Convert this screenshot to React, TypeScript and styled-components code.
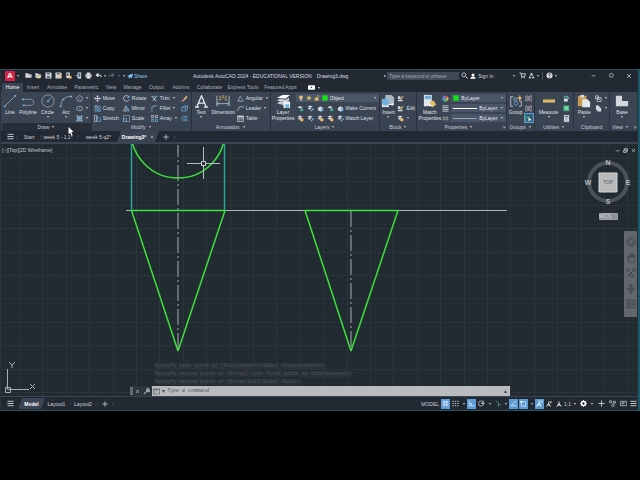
import React from 'react';
import styled, { createGlobalStyle, css } from 'styled-components';

const c = {
  frame: '#1d5a69',
  bar: '#222933',
  panel: '#3b4453',
  panelTitle: '#394250',
  field: '#4a5567',
  canvas: '#222a31',
  text: '#c9ced6',
  blue: '#5d9bd5',
  green: '#3be23b',
};

const GlobalStyle = createGlobalStyle`
  *, *::before, *::after { box-sizing: border-box; }
  html, body { margin: 0; background: #000; }
  body { font-family: "Liberation Sans", Arial, sans-serif; font-size: 5px; line-height: 6px; color: ${c.text}; }
  button, input, select { font: inherit; color: inherit; margin: 0; padding: 0; border: 0; background: none; border-radius: 0; }
  svg { display: block; flex: none; }
`;

/* ---------- glyphs, all drawn on a 16 unit square ---------- */
const W = '#d5d9df';
const B = '#6fb1dc';
const Y = '#e5c069';
const G = '#3fbf7f';

const glyphs: Record<string, React.ReactNode> = {
  caret: <path d="M3 5h10l-5 6z" fill={W} />,
  caretDim: <path d="M3 5h10l-5 6z" fill="#69727e" />,
  right: <path d="M5 3l7 5-7 5z" fill={W} />,
  newFile: <><path d="M1 3h6l2 2h6v8H1z" fill={W} /><path d="M8 8h7" stroke="#8a929c" /></>,
  open: <><path d="M1 3h5l2 2h5v3H5l-2 5H1z" fill={W} /><path d="M5 8h10l-3 6H3z" fill="#e9d9a8" /></>,
  save: <><path d="M1 1h12l2 2v12H1z" fill={W} /><path d="M4 2h7v4H4zM4 9h8v5H4z" fill="#6d7784" /></>,
  saveAs: <><path d="M1 1h12l2 2v12H1z" fill={W} /><path d="M4 2h7v4H4z" fill="#6d7784" /><path d="M7 14l7-7" stroke={Y} strokeWidth="3" /></>,
  web: <><path d="M3 1h8v13H3z" fill={W} /><path d="M5 3h3v6H5z" fill="#4c5664" /><path d="M9 9h6v6H9z" fill={Y} /></>,
  mobile: <><path d="M6 1h8v14H6z" fill={W} /><path d="M8 3h4v8H8z" fill="#4c5664" /><path d="M1 8h7M5 5l3 3-3 3" stroke={B} strokeWidth="2" fill="none" /></>,
  print: <><path d="M4 1h8v4H4zM1 5h14v7H1z" fill={W} /><path d="M4 9h8v6H4z" fill="#fff" stroke="#6d7784" /></>,
  undo: <path d="M15 11c0-3-3-4-8-4M7 3L2 7l5 4z" stroke={W} strokeWidth="2" fill={W} />,
  redo: <path d="M1 11c0-3 3-4 8-4M9 3l5 4-5 4z" stroke="#59626e" strokeWidth="2" fill="#59626e" />,
  plane: <path d="M0 8L16 1l-3 13-5-3-3 4-1-5 8-6-7 5z" fill="#7fc4ee" />,
  search: <><circle cx="6.500" cy="6.500" r="4.500" fill="none" stroke={W} strokeWidth="1.800" /><path d="M10 10l5 5" stroke={W} strokeWidth="2.200" /></>,
  user: <><circle cx="8" cy="5" r="4" fill="#fff" /><path d="M1 15c0-8 14-8 14 0z" fill="#fff" /></>,
  cart: <><path d="M1 2h3l2 8h7l2-6H5" fill="none" stroke={W} strokeWidth="2" /><circle cx="6" cy="13" r="1.600" fill={W} /><circle cx="12" cy="13" r="1.600" fill={W} /></>,
  autodesk: <><path d="M8 1l4 7H4z" fill={W} /><path d="M1 14l3-5 4 5zM15 14l-3-5-4 5z" fill={W} /></>,
  help: <><circle cx="8" cy="8" r="7" fill={W} /><path d="M6 6c0-3 5-3 4 0-1 1-2 1-2 3M8 11v2" fill="none" stroke={c.bar} strokeWidth="1.800" /></>,
  min: <path d="M2 9h12" stroke={W} strokeWidth="2" />,
  restore: <rect x="2" y="2" width="11" height="11" rx="2" fill="none" stroke={W} strokeWidth="2" />,
  cascade: <path d="M2 7h8v7H2zM5 6V2h9v8h-4" fill="none" stroke="#fff" strokeWidth="2" />,
  close: <path d="M3 3l10 10M13 3L3 13" stroke={W} strokeWidth="2" />,
  menu: <path d="M1 3h14M1 8h14M1 13h14" stroke={W} strokeWidth="2" />,
  plus: <path d="M8 1v14M1 8h14" stroke={W} strokeWidth="2" />,
  line: <><path d="M2 14L14 2" stroke="#9ba6b3" strokeWidth="0.900" /><path d="M1 13h2v2H1zM13 1h2v2h-2z" fill={B} /></>,
  polyline: <><path d="M2 6h8c6 0 6 7 0 7H3" fill="none" stroke="#9ba6b3" strokeWidth="0.900" /><path d="M1 5h2v2H1zM2 12h2v2H2z" fill={B} /></>,
  circle: <><circle cx="8" cy="8" r="7" fill="none" stroke="#9ba6b3" strokeWidth="0.900" /><path d="M8 8l4-4" stroke={B} /><path d="M7 7h2v2H7z" fill={B} /></>,
  arc: <><path d="M2 14C2 7 7 2 14 3" fill="none" stroke="#9ba6b3" strokeWidth="0.900" /><path d="M1 13h2v2H1zM4 5h2v2H4zM13 2h2v2h-2z" fill={B} /></>,
  polygon: <><path d="M8 1l7 5-3 8H4L1 6z" fill="none" stroke={W} strokeWidth="1.300" /><path d="M7 7h2v2H7z" fill={B} /></>,
  ellipse: <><ellipse cx="8" cy="8" rx="7" ry="5" fill="none" stroke={W} strokeWidth="1.300" /><path d="M7 7h2v2H7z" fill={B} /></>,
  hatch: <><rect x="3" y="3" width="10" height="10" fill="#6485a8" /><path d="M3 0v16M13 0v16M0 3h16M0 13h16M8 3v10M3 8h10" stroke="#a9c2da" strokeWidth="1.300" /></>,
  move: <path d="M8 0l3 4H9v3h3V5l4 3-4 3V9H9v3h2l-3 4-3-4h2V9H4v2L0 8l4-3v2h3V4H5z" fill={W} />,
  copy: <><circle cx="5" cy="4" r="3" fill="none" stroke={W} strokeWidth="1.500" /><circle cx="12" cy="5" r="3" fill="none" stroke={B} strokeWidth="1.500" /><path d="M2 9h6v5H2zM10 10h5v5h-5z" fill="none" stroke={B} strokeWidth="1.500" /></>,
  stretch: <><path d="M1 1h5v14H1z" fill="none" stroke={W} strokeWidth="1.500" /><path d="M8 4v11h7V8z" fill="none" stroke={B} strokeWidth="1.500" /></>,
  rotate: <><path d="M13 4A6.500 6.500 0 1 0 14 10" fill="none" stroke={W} strokeWidth="1.800" /><path d="M15 0v6H9z" fill={B} /></>,
  mirror: <><path d="M6 3v11H1z" fill="none" stroke={W} strokeWidth="1.300" /><path d="M10 3v11h5z" fill={B} /><path d="M8 0v16" stroke={B} /></>,
  scale: <><path d="M1 1h14v14H1z" fill="none" stroke="#9aa4b0" strokeWidth="1.500" /><path d="M1 8h7v7H1z" fill="none" stroke={B} strokeWidth="1.800" /></>,
  trim: <><path d="M1 2l11 12M12 3L5 13" stroke={W} strokeWidth="2" /><path d="M3 3h12" stroke={B} strokeWidth="1.500" /></>,
  fillet: <><path d="M2 15V8c0-4 3-6 7-6h6" fill="none" stroke="#9aa4b0" strokeWidth="1.500" /><path d="M2 8c0-4 3-6 7-6" fill="none" stroke={B} strokeWidth="2" /></>,
  array: <><path d="M1 1h5v5H1zM10 1h5v5h-5z" fill="none" stroke={W} strokeWidth="1.500" /><path d="M1 10h5v5H1zM10 10h5v5h-5z" fill="none" stroke={B} strokeWidth="1.700" /></>,
  erase: <><path d="M5 10L12 2l3 2-7 8z" fill={Y} /><path d="M3 10l5 3-3 2H1z" fill="#d98c8c" /></>,
  explode: <><path d="M2 6h8v8H2z" fill="none" stroke={B} strokeWidth="1.600" /><path d="M2 6l4-4h9v8l-5 4M10 6l5-4" fill="none" stroke={B} strokeWidth="1.600" /></>,
  offset: <path d="M15 3H6C0 3 0 13 6 13h9M15 6H8c-3 0-3 4 0 4h7" fill="none" stroke={B} strokeWidth="1.500" />,
  textA: <path d="M2 15L8 1l6 14M4 10h8M0 15h5M11 15h5" fill="none" stroke="#e8ebef" strokeWidth="1.600" />,
  dimension: <><path d="M1 2v12M15 2v12M1 11h14" fill="none" stroke="#c0c7d0" strokeWidth="0.900" /><path d="M8 1v4M4 2l2 3M12 2l-2 3M3 6l3 1M13 6l-3 1" stroke={Y} /><path d="M3 9l-2 2 2 2M13 9l2 2-2 2" fill="none" stroke={B} /></>,
  angular: <><path d="M8 2L2 14h13" fill="none" stroke={W} strokeWidth="1.400" /><path d="M7 6c4 0 6 3 6 7" fill="none" stroke={B} strokeWidth="1.500" /></>,
  leader: <><path d="M1 14L6 4h5" fill="none" stroke={W} strokeWidth="1.500" /><circle cx="13" cy="4" r="2.500" fill="none" stroke={B} strokeWidth="1.300" /></>,
  table: <><path d="M1 2h14v13H1z" fill="none" stroke={W} strokeWidth="1.500" /><path d="M1 4h14" stroke={W} strokeWidth="3" /><path d="M6 4v11M11 4v11M1 9h14" stroke={W} /></>,
  layers: <><path d="M1 4l6-3h8l-5 4z" fill="#fff" /><path d="M1 7l3-2 6 1 4-2v3l-4 2zM1 10l3-2 5 1v3z" fill="#c9ced5" /><path d="M8 8h7v7H8z" fill="#eef0f3" /><path d="M10 11h4v4h-4z" fill={B} /></>,
  bulb: <><circle cx="8" cy="6" r="5" fill={Y} /><path d="M6 11h4v4H6z" fill={W} /></>,
  sun: <><circle cx="8" cy="8" r="4" fill={Y} /><path d="M8 0v16M0 8h16M2 2l12 12M14 2L2 14" stroke={Y} /></>,
  lock: <><path d="M2 7h10v8H2z" fill={Y} /><path d="M9 7V4c0-4 6-3 5 1" fill="none" stroke={Y} strokeWidth="1.800" /></>,
  green: <path d="M1 1h14v14H1z" fill="#12e612" />,
  layerA: <><path d="M1 5l6-3 6 3-6 3z" fill={W} /><path d="M8 8h6v6H8z" fill={G} /></>,
  layerB: <><path d="M1 4l6-3 6 3-6 3zM1 8l6-2 3 2-4 3z" fill={W} /><path d="M9 14l6-6" stroke={B} strokeWidth="3" /></>,
  layerC: <><path d="M1 4l6-3 6 3-6 3zM1 8l6-2 3 2-4 3z" fill={W} /><circle cx="11" cy="11" r="4" fill={Y} /></>,
  layerD: <><path d="M2 7l5-4 7 3v7l-6 2-6-3z" fill={W} /><path d="M9 8l5-2v7l-5 2z" fill={B} /></>,
  insert: <><path d="M1 6h8v9H1z" fill="#dfe3e8" /><path d="M5 1h7l3 3v8H5z" fill="#aeb8c4" /><circle cx="5" cy="9" r="4" fill={B} /><path d="M9 12h5M12 10l2 2-2 2" stroke="#fff" fill="none" /></>,
  blockA: <><path d="M2 3h6v6H2zM2 11h11v3H2z" fill={W} /><path d="M8 10l6-7" stroke={Y} strokeWidth="2.500" /></>,
  match: <><path d="M1 1h9v13H1z" fill="#e3e7ec" /><path d="M2 2h7v4H2z" fill={B} /><path d="M7 10l5-3 3 5-4 3z" fill={Y} /><path d="M7 11l4 4" stroke="#fff" /></>,
  wheel: <><path d="M8 8V1a7 7 0 0 1 6 4z" fill="#e3594f" /><path d="M8 8l6-3a7 7 0 0 1-1 8z" fill="#e6b94b" /><path d="M8 8l5 5a7 7 0 0 1-9 1z" fill="#58c26a" /><path d="M8 8l-4 6a7 7 0 0 1-2-10z" fill="#4b98e0" /><path d="M8 8L2 4a7 7 0 0 1 6-3z" fill="#b565cf" /></>,
  weights: <path d="M1 2h14M1 6h14M1 10h14M1 14h14" stroke={W} strokeWidth="2" />,
  linetype: <><path d="M1 3h14v10H1z" fill="#59636f" /><path d="M2 6h5M9 6h5M2 10h3M6 10h3M11 10h3" stroke={W} /></>,
  group: <><path d="M4 2H1v13h3M12 8h3v7h-3" fill="none" stroke={W} /><circle cx="8" cy="11" r="2.500" fill="none" stroke={B} /><path d="M5 4h4v3H5z" fill="none" stroke={B} /><circle cx="13" cy="4" r="2" fill={Y} /><path d="M13 0v8M9 4h7" stroke={Y} strokeWidth="0.800" /></>,
  ungroup: <><path d="M5 2H2v12h3M11 2h3v12h-3M6 4h4v3H6zM6 9h4v3H6z" fill="none" stroke={W} strokeWidth="1.300" /><path d="M10 5l4-4M10 10l4 4" stroke="#d76b6b" strokeWidth="2" /></>,
  groupSel: <><path d="M4 2H1v12h3M5 4h4v3H5z" fill="none" stroke={G} strokeWidth="1.500" /><path d="M8 5v10l3-3h4z" fill="#fff" /></>,
  measure: <><path d="M0 6h16v4H0z" fill={Y} /><path d="M2 6v2M5 6v2M8 6v2M11 6v2M14 6v2" stroke="#b08a3b" strokeWidth="0.700" /></>,
  quick: <><path d="M2 8h9v7H2z" fill={W} /><path d="M7 2l7 6" stroke={B} strokeWidth="3" /><circle cx="4" cy="4" r="2.500" fill={G} /></>,
  select: <><path d="M1 1h13v13H1z" fill={G} /><path d="M4 9l4-5 3 7" stroke="#fff" strokeWidth="1.500" fill="none" /></>,
  calc: <><path d="M2 0h12v16H2z" fill={W} /><path d="M4 2h8v3H4z" fill="#59636f" /><path d="M4 8h8M4 11h8M4 14h8" stroke="#59636f" strokeDasharray="2 1" /></>,
  paste: <><path d="M1 2h10v12H1z" fill="#c79a55" /><path d="M4 1h4v3H4z" fill="#d9dde2" /><path d="M6 6h6l3 3v6H6z" fill="#e3e7ec" /></>,
  cut: <><path d="M1 2h7v7H1zM5 6h9v9H5z" fill="none" stroke={W} strokeWidth="1.600" /><path d="M4 5l8 7" stroke={W} strokeWidth="2" /></>,
  page: <path d="M2 1h7v3h2l3 4v7H5v-4H2z" fill={W} />,
  base: <path d="M1 2h7v6h7v6H1z" fill="#d3d7dd" />,
  wrench: <path d="M2 14l7-7M9 7c-2-4 2-7 4-5l-2 2 1 2 3-1c0 4-4 5-6 2" fill="none" stroke="#aeb3b9" strokeWidth="2.400" />,
  prompt: <><path d="M1 2h14v12H1z" fill="none" stroke="#5d6268" strokeWidth="1.500" /><path d="M1 4h14" stroke="#5d6268" strokeWidth="2" /><path d="M4 7l3 2-3 2" fill="none" stroke="#5d6268" /></>,
  grid: <path d="M5 1v14M11 1v14M1 5h14M1 11h14" stroke="#e5effa" strokeWidth="1.800" />,
  dots: <path d="M1 3h14M1 8h14M1 13h14" stroke={W} strokeWidth="2" strokeDasharray="3 2.500" />,
  ortho: <path d="M3 1v12h12M3 8h5v5" fill="none" stroke="#e5effa" strokeWidth="1.500" />,
  polar: <><circle cx="7" cy="8" r="6" fill="none" stroke={W} strokeWidth="1.500" /><path d="M7 8h8M7 8l7-6" stroke={W} strokeWidth="1.500" /></>,
  iso: <><path d="M2 2l6 5v8" fill="none" stroke="#50b870" strokeWidth="1.600" /><path d="M8 8l6 5" stroke="#8f98a3" strokeWidth="1.500" /></>,
  track: <path d="M14 2L2 13h13" fill="none" stroke="#e5effa" strokeWidth="1.800" />,
  snap: <><path d="M3 4h10v10H3z" fill="none" stroke="#e5effa" strokeWidth="1.600" /><path d="M1 2h4v4H1z" fill="#fff" /></>,
  person: <path d="M8 1v7M8 7l-6 8M8 7l6 8M4 11h8" stroke="#fff" strokeWidth="2.200" fill="none" />,
  personX: <path d="M7 1v7M7 7l-6 8M7 7l5 8M3 11h8M10 1l5 5M15 1l-5 5" stroke="#fff" strokeWidth="1.900" fill="none" />,
  gear: <><circle cx="8" cy="8" r="4.500" fill="none" stroke="#fff" strokeWidth="3.500" /><path d="M8 0v3M8 13v3M0 8h3M13 8h3M2 2l2 2M12 12l2 2M14 2l-2 2M2 14l2-2" stroke="#fff" strokeWidth="2" /></>,
  isolate: <><path d="M1 2h5v4H1zM10 3h5v4h-5z" fill="none" stroke={W} strokeWidth="1.500" /><circle cx="9" cy="12" r="3" fill="none" stroke={W} strokeWidth="1.500" /></>,
  clean: <><path d="M1 3h14v10H1z" fill="none" stroke={W} strokeWidth="1.500" /><path d="M5 10V6h5M6 10l5-4" fill="none" stroke={W} strokeWidth="1.500" /></>,
  media: <><rect x="0" y="3" width="16" height="10" rx="2" fill="#fff" /><path d="M6 6h4l-2 4z" fill={c.bar} /></>,
  arrow: <path d="M1 0v13l3-3 2 5 2-1-2-5h4z" fill="#fff" />,
  out: <path d="M3 3l8 8M12 5v7H5" stroke={W} strokeWidth="2" fill="none" />,
};

const Icon = ({ n, s = 7 }: { n: string; s?: number }) => (
  <svg width={s} height={s} viewBox="0 0 16 16" aria-hidden="true">{glyphs[n]}</svg>
);

/* ---------- window frame ---------- */
const Page = styled.div`
  min-height: 100vh;
  display: flex;
  flex-direction: column;
  padding: 69px 0;
  background: #000;
`;
const Window = styled.main`
  position: relative;
  flex: 1;
  display: flex;
  flex-direction: column;
  border: 1px solid ${c.frame};
  border-left-color: #2a323c;
  border-right-width: 2px;
  background: ${c.bar};
  overflow: hidden;
  white-space: nowrap;
`;

const TitleBar = styled.header`
  height: 11px;
  display: grid;
  grid-template-columns: 192fr 190fr 255fr;
  align-items: center;
`;
const Cluster = styled.div`
  display: flex;
  align-items: center;
  min-width: 0;
`;
const IconButton = styled.button<{ $w?: number; $on?: boolean; $h?: number }>`
  width: ${p => p.$w ?? 9}px;
  height: ${p => p.$h ?? 10}px;
  flex: none;
  display: flex;
  align-items: center;
  justify-content: center;
  ${p => p.$on && css`background: ${c.blue};`}
`;
const Logo = styled.button`
  width: 10px;
  height: 10px;
  margin-left: 4px;
  background: #d81f45;
  color: #fff;
  font-size: 8px;
  line-height: 10px;
  font-weight: bold;
`;
const TextButton = styled.button`
  display: flex;
  align-items: center;
  gap: 2px;
`;
const Share = styled(TextButton)`
  gap: 1px;
  color: #8fc4e6;
`;
const Title = styled.h1`
  margin: 0;
  display: flex;
  gap: 5px;
  font-size: 5px;
  font-weight: normal;
  color: #d8dce2;
`;
const SearchInput = styled.input`
  flex: 0 1 72px;
  min-width: 0;
  height: 8px;
  padding: 0 2px;
  background: #414956;
  &::placeholder { color: #a3a9b2; font-style: italic; opacity: 1; }
`;
const Divider = styled.span`
  width: 1px;
  height: 8px;
  margin: 0 2px;
  background: #454d59;
`;
const Spacer = styled.span<{ $w?: number }>`
  flex: ${p => (p.$w ? `0 1 ${p.$w}px` : '1')};
`;

/* ---------- ribbon ---------- */
const RibbonTabs = styled.nav`
  height: 11px;
  padding-left: 1px;
  display: flex;
  align-items: flex-end;
`;
const RibbonTab = styled.button<{ $active?: boolean; $w: number }>`
  flex: 0 1 ${p => p.$w}px;
  height: 9px;
  line-height: 9px;
  text-align: center;
  color: ${p => (p.$active ? '#fff' : '#a9afb9')};
  background: ${p => (p.$active ? c.panel : 'transparent')};
`;
const Ribbon = styled.div`
  display: grid;
  grid-template-columns: 90fr 100fr 79fr 110fr 37fr 90fr 28fr 39fr 36fr 28fr;
  padding-left: 1px;
  background: ${c.panel};
`;
const Panel = styled.section`
  min-width: 0;
  display: flex;
  flex-direction: column;
  border-right: 1px solid #29313c;
`;
const PanelBody = styled.div`
  height: 31px;
  padding-top: 1px;
  display: flex;
`;
const PanelTitle = styled.button<{ $hover?: boolean }>`
  height: 8px;
  display: flex;
  align-items: center;
  justify-content: center;
  gap: 2px;
  background: ${p => (p.$hover ? '#272e39' : c.panelTitle)};
`;
const BigButton = styled.button<{ $w: number }>`
  flex: 0 1 ${p => p.$w}px;
  min-width: 0;
  height: 30px;
  display: flex;
  flex-direction: column;
  align-items: center;
  line-height: 6px;
  color: #e0e3e8;
`;
const BigIcon = styled.span`
  height: 16px;
  display: flex;
  align-items: center;
`;
const BigLabel = styled.span`
  display: block;
  white-space: pre;
  text-align: center;
`;
const Column = styled.div<{ $w?: number }>`
  flex: ${p => (p.$w ? `0 1 ${p.$w}px` : '1')};
  min-width: 0;
  display: flex;
  flex-direction: column;
`;
const Row = styled.div<{ $gap?: number }>`
  height: 10px;
  display: flex;
  align-items: center;
  gap: ${p => p.$gap ?? 0}px;
`;
const Tool = styled.button<{ $on?: boolean }>`
  display: flex;
  align-items: center;
  gap: 2px;
  height: 10px;
  padding: 0 1px;
  color: #dde1e6;
  ${p => p.$on && css`background: #35607a; outline: 1px solid ${c.blue}; outline-offset: -1px;`}
`;
const Combo = styled.label`
  flex: 1;
  min-width: 0;
  height: 8px;
  padding: 0 2px;
  display: flex;
  align-items: center;
  gap: 2px;
  background: ${c.field};
`;
const Select = styled.select<{ $fixed?: boolean }>`
  appearance: none;
  flex: ${p => (p.$fixed ? 'none' : '1')};
  min-width: 0;
  height: 8px;
  line-height: 8px;
  color: #e6e9ed;
`;
const Stroke = styled.span<{ $thick?: boolean }>`
  flex: 1;
  height: 1px;
  background: ${p => (p.$thick ? '#fff' : '#98a1ad')};
`;

const Big = ({ n, label, w, caret, s = 14 }: { n: string; label: string; w: number; caret?: boolean; s?: number }) => (
  <BigButton $w={w}>
    <BigIcon><Icon n={n} s={s} /></BigIcon>
    <BigLabel>{label}</BigLabel>
    {caret && <Icon n="caret" s={4} />}
  </BigButton>
);
const Small = ({ n, label, caret, on, s = 7 }: { n: string; label?: string; caret?: boolean; on?: boolean; s?: number }) => (
  <Tool $on={on} aria-label={label ?? n}>
    <Icon n={n} s={s} />
    {label && <span>{label}</span>}
    {caret && <Icon n="caret" s={4} />}
  </Tool>
);
const Group = ({ title, children, hover, caret = true, out }: { title: string; children: React.ReactNode; hover?: boolean; caret?: boolean; out?: boolean }) => (
  <Panel>
    <PanelBody>{children}</PanelBody>
    <PanelTitle $hover={hover}>
      {out && <Spacer />}
      <span>{title}</span>
      {caret && <Icon n="caret" s={4} />}
      {out && <><Spacer /><Icon n="out" s={4} /></>}
    </PanelTitle>
  </Panel>
);

/* ---------- document and layout tabs ---------- */
const FileTabs = styled.nav`
  height: 13px;
  padding-left: 5px;
  display: flex;
  align-items: center;
  border-bottom: 2px solid ${c.panel};
`;
const DocTab = styled.button<{ $active?: boolean; $w: number }>`
  flex: 0 1 ${p => p.$w}px;
  height: 11px;
  display: flex;
  align-items: center;
  justify-content: center;
  gap: 4px;
  color: ${p => (p.$active ? '#fff' : '#d0d4da')};
  font-weight: ${p => (p.$active ? 'bold' : 'normal')};
  ${p => p.$active && css`
    background: ${c.panel};
    clip-path: polygon(4px 0, 100% 0, calc(100% - 4px) 100%, 0 100%);
  `}
`;
const Slash = styled.span`
  flex: 0 0 4px;
  color: #606873;
  text-align: center;
`;

/* ---------- drawing area ---------- */
const Viewport = styled.section`
  position: relative;
  flex: 1;
  min-height: 252px;
  background: ${c.canvas};
`;
const Drawing = styled.svg`
  position: absolute;
  inset: 0;
  width: 100%;
  height: 100%;
`;
const ViewLabel = styled.div`
  position: absolute;
  left: 1px;
  top: 3px;
  color: #c5cad0;
`;
const ViewControls = styled.div`
  position: absolute;
  right: 1px;
  top: 1px;
  display: flex;
`;
const ViewCube = styled.div`
  position: absolute;
  right: 6px;
  top: 13px;
  width: 48px;
  display: flex;
  flex-direction: column;
  align-items: center;
  gap: 6px;
`;
const Wcs = styled.button`
  width: 19px;
  height: 7px;
  border-radius: 1px;
  background: #8b9097;
  border: 1px solid #a0a4aa;
  color: #d5d8dc;
  line-height: 5px;
  text-align: left;
`;
const NavBar = styled.div`
  position: absolute;
  right: 1px;
  top: 87px;
  width: 13px;
  height: 86px;
  padding: 6px 0 8px;
  display: flex;
  flex-direction: column;
  align-items: center;
  justify-content: space-between;
  border-radius: 1px;
  background: #62676d;
`;
const CommandDock = styled.div`
  position: absolute;
  left: 129px;
  right: 128px;
  bottom: 0;
`;
const History = styled.div`
  padding-left: 25px;
  font-family: "Liberation Mono", monospace;
  color: #50575e;
  p { margin: 0; height: 8px; line-height: 8px; }
  span { background: #293037; }
`;
const CommandRow = styled.div`
  display: flex;
  align-items: center;
  height: 10px;
  background: #2d343b;
`;
const Grip = styled.span`
  width: 3px;
  height: 8px;
  background: #656b72;
`;
const CommandField = styled.label`
  flex: 1;
  min-width: 0;
  height: 10px;
  padding: 0 3px 0 1px;
  display: flex;
  align-items: center;
  gap: 2px;
  background: #b9bbbe;
`;
const CommandInput = styled.input`
  flex: 1;
  min-width: 0;
  height: 10px;
  font-family: "Liberation Mono", monospace;
  font-style: italic;
  &::placeholder { color: #53575c; opacity: 1; }
`;

const StatusBar = styled.footer`
  height: 14px;
  padding-left: 5px;
  display: flex;
  align-items: center;
  border-top: 1px solid ${c.panel};
`;
const Pointer = styled.span`
  position: absolute;
  left: 67px;
  top: 57px;
`;

const NavIcon = ({ d }: { d: string }) => (
  <svg width="10" height="10" viewBox="0 0 16 16"><path d={d} fill="none" stroke="#3e444b" strokeWidth="1.300" /></svg>
);

const Cube = () => (
  <svg width="48" height="50" viewBox="0 0 48 50" fontFamily="Liberation Sans" fontWeight="bold" textAnchor="middle">
    <circle cx="24" cy="25" r="19" fill="none" stroke="#4b5158" strokeWidth="4" />
    <g fontSize="7" fill="#b6babf">
      <text x="24" y="8">N</text><text x="24" y="47">S</text>
      <text x="4" y="28">W</text><text x="44" y="28">E</text>
    </g>
    <path d="M15 16h18v19H15z" fill="#b9babc" stroke="#d1d2d4" />
    <text x="24" y="27" fontSize="5" fontWeight="normal" fill="#555a60">TOP</text>
  </svg>
);

/* Grid rulings as one path: step is the cell size, count the number of lines each way. */
const ruling = (step: number, count: number) =>
  Array.from({ length: count }, (_, i) => {
    const x = Math.round(18 - 23.4 + i * step) + 0.5;
    const y = Math.round(14 - 23.4 + i * step) + 0.5;
    return `M${x} 0V3000M0 ${y}H3000`;
  }).join('');

const Plan = () => (
  <Drawing>
    <path d={ruling(4.68, 600)} stroke="#242c33" />
    <path d={ruling(23.4, 120)} stroke="#2b343b" />
    <path d="M125 66.500h381" stroke="#a9b3b8" />
    <path d="M130.500 0v67M223.500 0v67" stroke="#2aa596" strokeWidth="1.500" />
    <g fill="none" stroke={c.green} strokeWidth="1.500">
      <circle cx="177" cy="-13" r="47" />
      <path d="M130.500 66.500h93.500L177 207zM304 66.500h93L350 207z" strokeLinejoin="bevel" />
    </g>
    <path d="M177 1v206" stroke="#a5acb1" strokeDasharray="16 3 2 3" strokeDashoffset="4" />
    <path d="M350 67v140" stroke="#a5acb1" strokeDasharray="16 3 2 3" />
    <path d="M186 19.500h14M205 19.500h14M202.500 3v14M202.500 22v13" stroke="#b6bcc0" />
    <path d="M200.500 17.500h4v4h-4z" fill="none" stroke="#cfd3d6" />
    <g fill="none" stroke="#a9aeb2">
      <path d="M6.500 225v20.500H28M4.500 243.500h5v5h-5z" />
      <path d="M8 218l3 3 3-3M11 221v3M29 240l5 5M34 240l-5 5" />
    </g>
  </Drawing>
);

const ribbonTabs: [string, number][] = [
  ['Home', 21], ['Insert', 20], ['Annotate', 28], ['Parametric', 31], ['View', 18], ['Manage', 25],
  ['Output', 23], ['Add-ins', 26], ['Collaborate', 31], ['Express Tools', 36], ['Featured Apps', 39],
];

export default function App() {
  return (
    <>
      <GlobalStyle />
      <Page>
        <Window>
          <TitleBar>
            <Cluster>
              <Logo aria-label="Application menu">A</Logo>
              <IconButton $w={6} aria-label="More"><Icon n="caret" s={4} /></IconButton>
              <Spacer $w={2} />
              {['newFile', 'open', 'save', 'saveAs', 'web', 'mobile', 'print', 'undo'].map(n => (
                <IconButton key={n} $w={10} aria-label={n}><Icon n={n} /></IconButton>
              ))}
              <IconButton $w={4} aria-label="Undo list"><Icon n="caret" s={4} /></IconButton>
              <IconButton $w={9} aria-label="Redo"><Icon n="redo" /></IconButton>
              <IconButton $w={5} aria-label="Redo list"><Icon n="caretDim" s={4} /></IconButton>
              <IconButton $w={6} aria-label="Customize"><Icon n="caret" s={4} /></IconButton>
              <Share><Icon n="plane" s={6} /><span>Share</span></Share>
            </Cluster>
            <Title><span>Autodesk AutoCAD 2024 - EDUCATIONAL VERSION</span><span>Drawing3.dwg</span></Title>
            <Cluster>
              <Icon n="right" s={4} />
              <SearchInput aria-label="Search" placeholder="Type a keyword or phrase" />
              <IconButton $w={11} aria-label="Search"><Icon n="search" /></IconButton>
              <TextButton><Icon n="user" s={6} /><span>Sign In</span></TextButton>
              <Spacer $w={17} />
              <IconButton $w={7} aria-label="Account"><Icon n="caret" s={4} /></IconButton>
              <IconButton $w={9} aria-label="Store"><Icon n="cart" /></IconButton>
              <IconButton $w={9} aria-label="Autodesk"><Icon n="autodesk" /></IconButton>
              <Icon n="caret" s={4} />
              <Divider />
              <IconButton aria-label="Help"><Icon n="help" /></IconButton>
              <Icon n="caret" s={4} />
              <Spacer />
              <IconButton $w={18} aria-label="Minimize"><Icon n="min" s={5} /></IconButton>
              <IconButton $w={18} aria-label="Restore"><Icon n="restore" s={5} /></IconButton>
              <IconButton $w={18} aria-label="Close"><Icon n="close" s={6} /></IconButton>
            </Cluster>
          </TitleBar>

          <RibbonTabs>
            {ribbonTabs.map(([t, w], i) => (
              <RibbonTab key={t} $w={w} $active={i === 0}>{t}</RibbonTab>
            ))}
            <Spacer $w={7} />
            <IconButton $h={9} aria-label="Ribbon display"><Icon n="media" /></IconButton>
            <IconButton $w={6} $h={9} aria-label="Ribbon options"><Icon n="caret" s={4} /></IconButton>
          </RibbonTabs>

          <Ribbon>
            <Group title="Draw" hover>
              <Big n="line" label="Line" w={16} />
              <Big n="polyline" label="Polyline" w={20} />
              <Big n="circle" label="Circle" w={19} caret />
              <Big n="arc" label="Arc" w={18} caret />
              <Column>
                <Small n="polygon" caret />
                <Small n="ellipse" caret />
                <Small n="hatch" caret />
              </Column>
            </Group>
            <Group title="Modify">
              <Spacer $w={1} />
              <Column $w={29}><Small n="move" label="Move" /><Small n="copy" label="Copy" /><Small n="stretch" label="Stretch" /></Column>
              <Column $w={28}><Small n="rotate" label="Rotate" /><Small n="mirror" label="Mirror" /><Small n="scale" label="Scale" /></Column>
              <Column $w={30}><Small n="trim" label="Trim" caret /><Small n="fillet" label="Fillet" caret /><Small n="array" label="Array" caret /></Column>
              <Column><Small n="erase" /><Small n="explode" /><Small n="offset" /></Column>
            </Group>
            <Group title="Annotation">
              <Big n="textA" label="Text" w={19} caret s={13} />
              <Big n="dimension" label="Dimension" w={25} />
              <Column><Small n="angular" label="Angular" caret /><Small n="leader" label="Leader" caret /><Small n="table" label="Table" /></Column>
            </Group>
            <Group title="Layers">
              <Big n="layers" label={'Layer\nProperties'} w={25} s={15} />
              <Column>
                <Row>
                  <Combo>
                    <Icon n="bulb" s={6} /><Icon n="sun" s={6} /><Icon n="lock" s={6} /><Icon n="green" s={6} />
                    <Select aria-label="Layer"><option>Object</option></Select>
                    <Icon n="caret" s={4} />
                  </Combo>
                </Row>
                <Row $gap={1}><Small n="layerA" /><Small n="layerB" /><Small n="layerD" /><Small n="layerA" /><Small n="layerD" label="Make Current" /></Row>
                <Row $gap={1}><Small n="layerC" /><Small n="layerB" /><Small n="layerC" /><Small n="layerC" /><Small n="layerB" label="Match Layer" /></Row>
              </Column>
            </Group>
            <Group title="Block">
              <Big n="insert" label="Insert" w={16} caret />
              <Column><Small n="blockA" /><Small n="blockA" label="Edit" /><Small n="layerC" caret /></Column>
            </Group>
            <Group title="Properties" out>
              <Big n="match" label={'Match\nProperties'} w={25} />
              <Column>
                <Row $gap={2}>
                  <Icon n="wheel" />
                  <Combo><Icon n="green" s={6} /><Select aria-label="Color"><option>ByLayer</option></Select><Icon n="caret" s={4} /></Combo>
                </Row>
                <Row $gap={2}>
                  <Icon n="weights" />
                  <Combo><Stroke $thick /><Select $fixed aria-label="Lineweight"><option>ByLayer</option></Select><Icon n="caret" s={4} /></Combo>
                </Row>
                <Row $gap={2}>
                  <Icon n="linetype" />
                  <Combo><Stroke /><Select $fixed aria-label="Linetype"><option>ByLayer</option></Select><Icon n="caret" s={4} /></Combo>
                </Row>
              </Column>
            </Group>
            <Group title="Groups">
              <Big n="group" label="Group" w={17} s={12} />
              <Column><Small n="ungroup" /><Small n="ungroup" /><Small n="groupSel" on /></Column>
            </Group>
            <Group title="Utilities">
              <Big n="measure" label="Measure" w={27} caret s={12} />
              <Column><Small n="quick" /><Small n="select" /><Small n="calc" /></Column>
            </Group>
            <Group title="Clipboard" caret={false}>
              <Big n="paste" label="Paste" w={20} caret />
              <Column><Small n="cut" caret /><Small n="page" caret /></Column>
            </Group>
            <Group title="View" out>
              <Big n="base" label="Base" w={24} caret />
            </Group>
          </Ribbon>

          <FileTabs>
            <IconButton aria-label="Menu"><Icon n="menu" /></IconButton>
            <Slash>/</Slash>
            <DocTab $w={20}>Start</DocTab>
            <Slash>/</Slash>
            <DocTab $w={30}>week 5 - 1.1*</DocTab>
            <Spacer $w={3} />
            <Slash>/</Slash>
            <DocTab $w={37}>week 5-q2*</DocTab>
            <DocTab $w={42} $active>Drawing3* <Icon n="close" s={4} /></DocTab>
            <IconButton $w={14} aria-label="New drawing"><Icon n="plus" s={6} /></IconButton>
            <Slash>/</Slash>
          </FileTabs>

          <Viewport>
            <Plan />
            <ViewLabel>[−][Top][2D Wireframe]</ViewLabel>
            <ViewControls>
              {['min', 'cascade', 'close'].map(n => <IconButton key={n} $w={8} aria-label={`${n} view`}><Icon n={n} s={5} /></IconButton>)}
            </ViewControls>
            <ViewCube><Cube /><Wcs>WCS</Wcs></ViewCube>
            <NavBar>
              <NavIcon d="M8 1a7 7 0 1 0 .1 0M8 4a4 4 0 1 0 .1 0M5 13l3-3 3 3" />
              <NavIcon d="M4 15V9L2 6l2-1 2 3V2h2v5V1h2v6-5h2v6-4h2v8l-2 3z" />
              <NavIcon d="M2 2l12 12M14 2L2 14M2 6V2h4M10 2h4v4M9 9a3 3 0 1 0 3 3" />
              <NavIcon d="M8 1v14M1 8h14M8 4a4 4 0 1 0 .1 0M5 3l3-2 3 2M5 13l3 2 3-2" />
              <NavIcon d="M1 2h14v12H1zM6 5l5 3-5 3zM4 2v12M12 2v12" />
            </NavBar>
            <CommandDock>
              <History>
                <p><span>Specify base point or [Displacement/mOde] &lt;Displacement&gt;:</span></p>
                <p><span>Specify second point or [Array] &lt;use first point as displacement&gt;:</span></p>
                <p><span>Specify second point or [Array/Exit/Undo] &lt;Exit&gt;:</span></p>
              </History>
              <CommandRow>
                <Grip />
                <IconButton $w={8} aria-label="Close command line"><Icon n="close" s={5} /></IconButton>
                <IconButton $w={11} aria-label="Customize"><Icon n="wrench" /></IconButton>
                <CommandField>
                  <Icon n="prompt" s={7} />
                  <svg width="3" height="3" viewBox="0 0 3 3"><path d="M0 0h3L1.500 3z" fill="#44484d" /></svg>
                  <CommandInput aria-label="Command" placeholder="Type a command" />
                  <svg width="3" height="3" viewBox="0 0 3 3"><path d="M0 3h3L1.500 0z" fill="#44484d" /></svg>
                </CommandField>
              </CommandRow>
            </CommandDock>
          </Viewport>

          <StatusBar>
            <IconButton aria-label="Layouts"><Icon n="menu" /></IconButton>
            <Spacer $w={3} />
            <DocTab $w={27} $active>Model</DocTab>
            <DocTab $w={23}>Layout1</DocTab>
            <Slash>/</Slash>
            <DocTab $w={22}>Layout2</DocTab>
            <Slash>/</Slash>
            <IconButton $w={13} aria-label="New layout"><Icon n="plus" s={6} /></IconButton>
            <Slash>/</Slash>
            <Spacer />
            <TextButton>MODEL</TextButton>
            <Spacer $w={2} />
            <IconButton $on aria-label="Grid"><Icon n="grid" /></IconButton>
            <IconButton $w={10} aria-label="Snap"><Icon n="dots" /></IconButton>
            <IconButton $w={7} aria-label="Snap options"><Icon n="caret" s={4} /></IconButton>
            <IconButton $on aria-label="Ortho"><Icon n="ortho" /></IconButton>
            <IconButton $w={10} aria-label="Polar"><Icon n="polar" /></IconButton>
            <IconButton $w={7} aria-label="Polar options"><Icon n="caret" s={4} /></IconButton>
            <IconButton $w={10} aria-label="Isodraft"><Icon n="iso" /></IconButton>
            <IconButton $w={6} aria-label="Isodraft options"><Icon n="caret" s={4} /></IconButton>
            <IconButton $on aria-label="Tracking"><Icon n="track" /></IconButton>
            <Spacer $w={1} />
            <IconButton $on aria-label="Object snap"><Icon n="snap" /></IconButton>
            <IconButton $w={7} aria-label="Object snap options"><Icon n="caret" s={4} /></IconButton>
            <IconButton $on aria-label="Annotation visibility"><Icon n="personX" /></IconButton>
            <IconButton $w={10} aria-label="Auto scale"><Icon n="personX" s={6} /></IconButton>
            <IconButton $w={10} aria-label="Annotation scale"><Icon n="person" s={6} /></IconButton>
            <TextButton>1:1<Icon n="caret" s={4} /></TextButton>
            <Spacer $w={2} />
            <IconButton aria-label="Workspace"><Icon n="gear" /></IconButton>
            <IconButton $w={8} aria-label="Workspace options"><Icon n="caret" s={4} /></IconButton>
            <IconButton $w={11} aria-label="Monitor"><Icon n="plus" /></IconButton>
            <IconButton $w={11} aria-label="Isolate"><Icon n="isolate" /></IconButton>
            <IconButton $w={10} aria-label="Clean screen"><Icon n="clean" /></IconButton>
            <IconButton $w={10} aria-label="Customization"><Icon n="menu" /></IconButton>
          </StatusBar>
          <Pointer><Icon n="arrow" s={9} /></Pointer>
        </Window>
      </Page>
    </>
  );
}
